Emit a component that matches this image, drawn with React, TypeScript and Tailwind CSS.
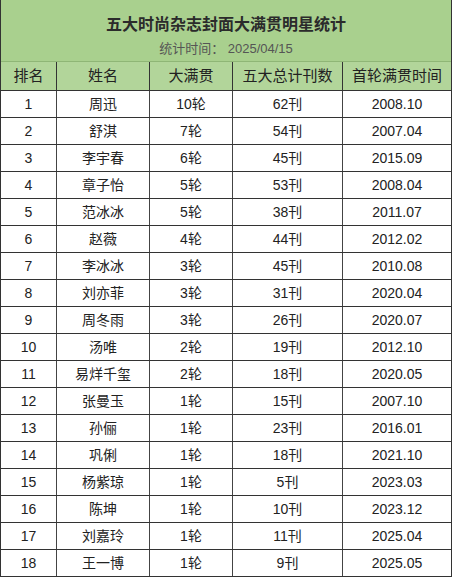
const rows: [string, string, string, string, string][] = [
  ['1', '周迅', '10轮', '62刊', '2008.10'],
  ['2', '舒淇', '7轮', '54刊', '2007.04'],
  ['3', '李宇春', '6轮', '45刊', '2015.09'],
  ['4', '章子怡', '5轮', '53刊', '2008.04'],
  ['5', '范冰冰', '5轮', '38刊', '2011.07'],
  ['6', '赵薇', '4轮', '44刊', '2012.02'],
  ['7', '李冰冰', '3轮', '45刊', '2010.08'],
  ['8', '刘亦菲', '3轮', '31刊', '2020.04'],
  ['9', '周冬雨', '3轮', '26刊', '2020.07'],
  ['10', '汤唯', '2轮', '19刊', '2012.10'],
  ['11', '易烊千玺', '2轮', '18刊', '2020.05'],
  ['12', '张曼玉', '1轮', '15刊', '2007.10'],
  ['13', '孙俪', '1轮', '23刊', '2016.01'],
  ['14', '巩俐', '1轮', '18刊', '2021.10'],
  ['15', '杨紫琼', '1轮', '5刊', '2023.03'],
  ['16', '陈坤', '1轮', '10刊', '2023.12'],
  ['17', '刘嘉玲', '1轮', '11刊', '2025.04'],
  ['18', '王一博', '1轮', '9刊', '2025.05'],
]

const headers = ['排名', '姓名', '大满贯', '五大总计刊数', '首轮满贯时间']

const cols = 'grid grid-cols-[56px_93px_83px_110px_108px]'

export default function App() {
  return (
    <div
      className="h-[578px] w-[454px] overflow-hidden bg-white text-[#222]"
      style={{ fontFamily: '"Liberation Sans", "Noto Sans CJK SC", sans-serif' }}
    >
      <div className="w-[452px] border-x border-[#333]">
        {/* title block */}
        <div className="flex h-[62px] flex-col items-center border-b border-[#8fb676] bg-[#a9d08e] pt-[15px]">
          <div className="text-[16px] font-bold leading-[20px] text-[#2b2b2b]">五大时尚杂志封面大满贯明星统计</div>
          <div className="mt-[6px] text-[13px] leading-[16px] text-[#555]">统计时间： 2025/04/15</div>
        </div>

        {/* header row */}
        <div className={`${cols} h-[29px] border-b border-[#333] bg-[#b2d59a] text-[15px] text-[#222]`}>
          {headers.map((h, i) => (
            <div
              key={h}
              className={`flex items-center justify-center ${i < 4 ? 'border-r border-[#333]' : ''}`}
            >
              {h}
            </div>
          ))}
        </div>

        {rows.map((r) => (
          <div key={r[0]} className={`${cols} h-[27px] border-b border-[#333] text-[14px]`}>
            {r.map((c, i) => (
              <div
                key={i}
                className={`flex items-center justify-center ${i < 4 ? 'border-r border-[#444]' : ''}`}
              >
                {c}
              </div>
            ))}
          </div>
        ))}
      </div>
    </div>
  )
}
